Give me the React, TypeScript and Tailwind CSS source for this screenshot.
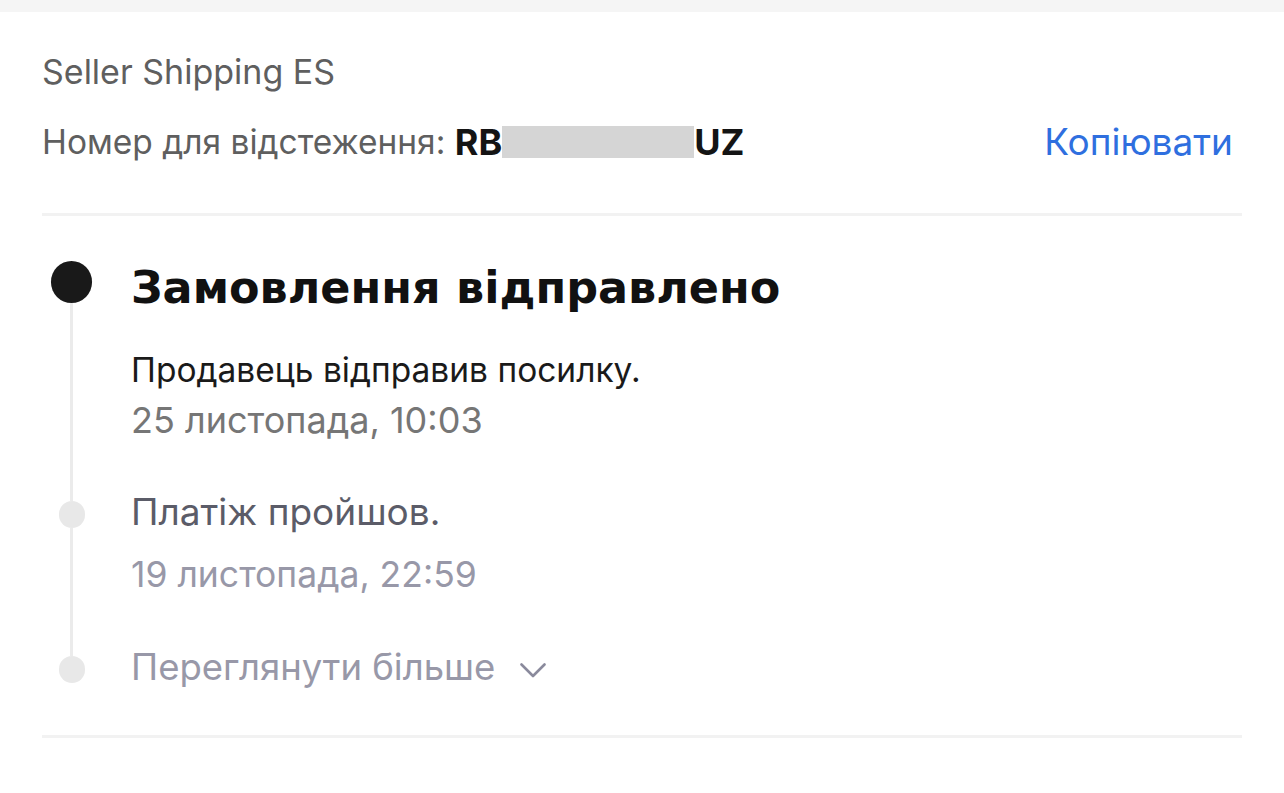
import React from 'react';

const font = { fontFamily: 'Inter, "Noto Sans", sans-serif' };

const TimelineRail: React.FC<{ active?: boolean; last?: boolean }> = ({ active, last }) => (
  <div className="w-[59px] shrink-0 flex flex-col items-center">
    {active ? (
      <>
        <div className="h-px w-[3px]" />
        <div className="w-[41px] h-[42px] rounded-full bg-[#191919] shrink-0" />
      </>
    ) : (
      <>
        <div className="h-[9px] w-[3px] bg-[#ebebeb]" />
        <div className="w-[26px] h-[27px] rounded-full bg-[#e8e8e8] shrink-0" />
      </>
    )}
    <div className={`flex-1 w-[3px] ${last ? '' : 'bg-[#ebebeb]'}`} />
  </div>
);

export default function App() {
  return (
    <div className="min-h-screen bg-white" style={font}>
      <div className="h-3 bg-[#f5f5f5]" />

      <div className="px-[42px]">
        {/* Shipping header */}
        <div className="pt-[38px] pb-[49px] border-b-[3px] border-[#f2f2f2]">
          <div className="text-[34px] leading-[44px] text-[#5f5f5f]">Seller Shipping ES</div>
          <div className="mt-[26px] flex items-center justify-between pr-[9px]">
            <div className="text-[33.5px] leading-[44px] text-[#5f5f5f] flex items-center">
              <span>Номер для відстеження:&nbsp;</span>
              <span className="font-bold text-[36px] text-[#141414]">RB</span>
              <span className="inline-block w-[192px] h-[32px] bg-[#d5d5d5]" />
              <span className="font-bold text-[36px] text-[#141414]">UZ</span>
            </div>
            <button className="text-[37px] leading-[44px] text-[#2f6fdf]">Копіювати</button>
          </div>
        </div>

        {/* Timeline */}
        <div className="pt-[44px] pb-[48px] border-b-[3px] border-[#f2f2f2]">
          <div className="flex">
            <TimelineRail active />
            <div className="pl-[30px] pb-[52px]">
              <div
                className="text-[44.5px] leading-[52px] font-bold text-[#111] mt-[2px]"
                style={{ fontFamily: '"DejaVu Sans", sans-serif' }}
              >
                Замовлення відправлено
              </div>
              <div className="mt-[36px] text-[33.5px] leading-[40px] text-[#1a1a1a]">Продавець відправив посилку.</div>
              <div className="mt-[10px] text-[36px] leading-[40px] text-[#767676]">25 листопада, 10:03</div>
            </div>
          </div>
          <div className="flex">
            <TimelineRail />
            <div className="pl-[30px] pb-[52px]">
              <div className="text-[37px] leading-[40px] text-[#5b5c68]">Платіж пройшов.</div>
              <div className="mt-[23px] text-[35.5px] leading-[40px] text-[#9898a8]">19 листопада, 22:59</div>
            </div>
          </div>
          <div className="flex">
            <TimelineRail last />
            <div className="pl-[30px] flex items-center text-[36.5px] leading-[40px] text-[#9898a8]">
              <span>Переглянути більше</span>
              <svg width="26" height="15" viewBox="0 0 26 15" className="ml-[25px] mt-[7px]" fill="none">
                <polyline points="1.5,1.5 13,13 24.5,1.5" stroke="#8a8a9c" strokeWidth="2.6" strokeLinecap="round" strokeLinejoin="round" />
              </svg>
            </div>
          </div>
        </div>
      </div>
    </div>
  );
}
